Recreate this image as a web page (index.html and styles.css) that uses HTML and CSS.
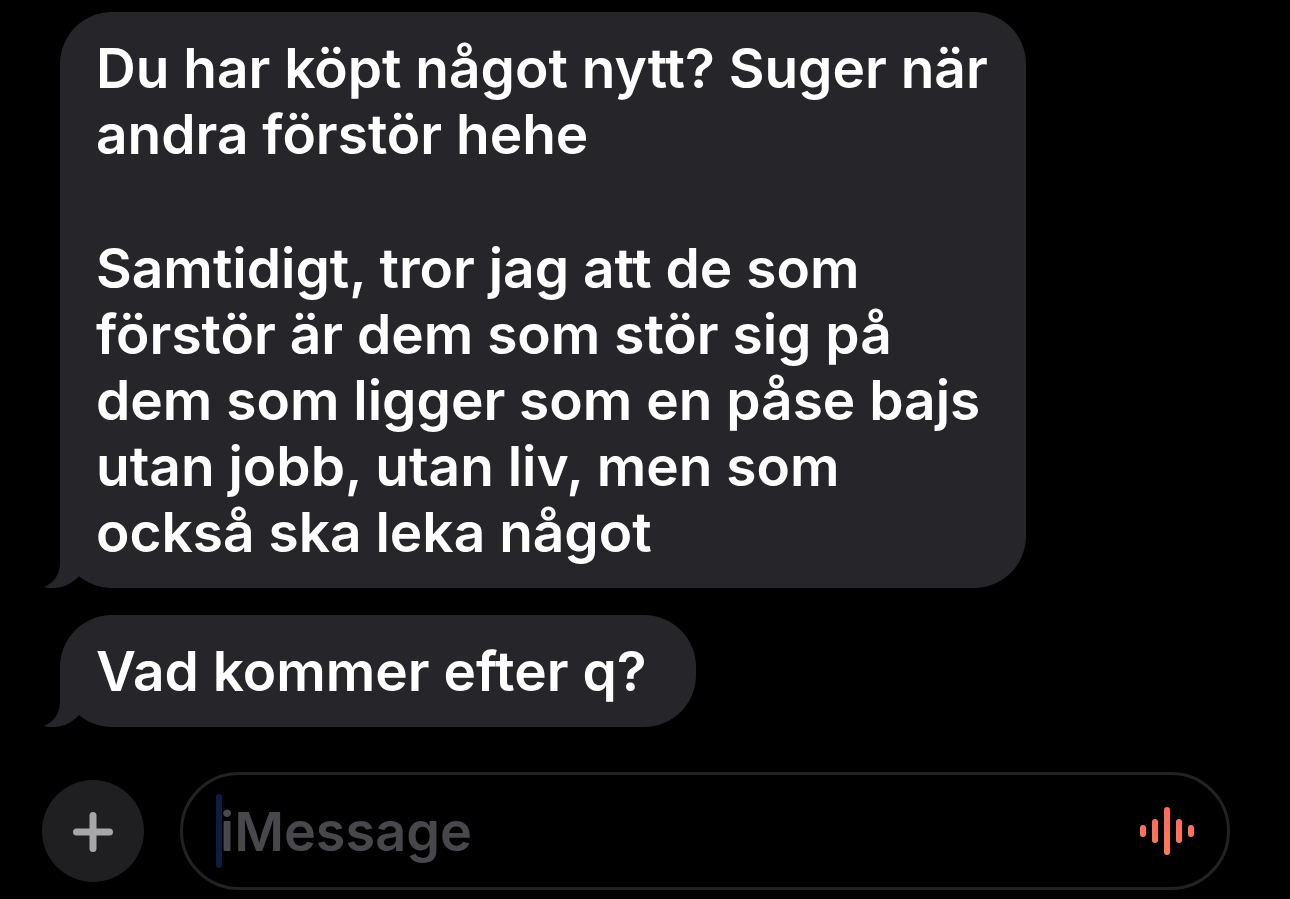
FILE: index.html
```html
<!DOCTYPE html>
<html lang="sv">
<head>
<meta charset="utf-8">
<meta name="viewport" content="width=device-width, initial-scale=1">
<title>iMessage</title>
<link rel="stylesheet" href="styles.css">
</head>
<body>
<main class="chat">
  <section class="messages">
    <article class="bubble bubble-long">
      <p>Du har köpt något nytt? Suger när<br>andra förstör hehe</p>
      <p>Samtidigt, tror jag att de som<br>förstör är dem som stör sig på<br>dem som ligger som en påse bajs<br>utan jobb, utan liv, men som<br>också ska leka något</p>
      <svg class="tail" viewBox="0 0 44 48" aria-hidden="true"><path d="M16 0V23C16 34 10 43 0 47C12 50 25 47 35 36L44 20V0Z"/></svg>
    </article>
    <article class="bubble">
      <p>Vad kommer efter q?</p>
      <svg class="tail" viewBox="0 0 44 48" aria-hidden="true"><path d="M16 0V23C16 34 10 43 0 47C12 50 25 47 35 36L44 20V0Z"/></svg>
    </article>
  </section>
  <form class="composer">
    <button class="add" type="button" aria-label="Lägg till">
      <svg class="plus" viewBox="0 0 42 42" aria-hidden="true"><path d="M21 5.500V38.500M4.500 22H37.500"/></svg>
    </button>
    <div class="field">
      <span class="caret"></span>
      <input class="input" type="text" placeholder="iMessage" aria-label="iMessage">
      <button class="voice" type="button" aria-label="Spela in ljud">
        <svg class="wave" viewBox="0 0 54 48" aria-hidden="true">
          <defs><linearGradient id="coral" gradientUnits="userSpaceOnUse" x1="0" y1="0" x2="0" y2="48"><stop offset="0.2" stop-color="#ff6b5e"/><stop offset="1" stop-color="#ff7e50"/></linearGradient></defs>
          <path stroke="url(#coral)" d="M3 21V27M15 15V33M27 3V45M39 15V33M51 21V27"/>
        </svg>
      </button>
    </div>
  </form>
</main>
</body>
</html>
```
FILE: styles.css
```css
* { box-sizing: border-box; }
body {
  margin: 0;
  background: #000;
  color: #fff;
  font-family: Inter, "Liberation Sans", sans-serif;
}
.chat { padding: 12px 60px 8px; }
.messages {
  display: flex;
  flex-direction: column;
  align-items: flex-start;
  gap: 27px;
}
.bubble {
  position: relative;
  padding: 23px 49px 23px 36px;
  border-radius: 52px;
  background: #26252a;
  font-size: 55px;
  font-weight: 600;
  line-height: 66px;
}
.bubble-long { padding-right: 38px; }
.bubble p { margin: 0; }
.bubble p + p { margin-top: 68px; }
.tail {
  position: absolute;
  left: -16px;
  bottom: 0;
  width: 44px;
  height: 48px;
  fill: #26252a;
}
.composer {
  display: flex;
  align-items: center;
  gap: 36px;
  margin: 45px 0 0 -18px;
}
.add {
  display: grid;
  place-items: center;
  flex: none;
  width: 102px;
  height: 102px;
  padding: 0;
  border: 0;
  border-radius: 50%;
  background: #1f1f21;
}
.plus {
  width: 42px;
  height: 42px;
  fill: none;
  stroke: #a7a7a9;
  stroke-width: 7;
  stroke-linecap: round;
}
.field {
  display: flex;
  flex: 1;
  align-items: center;
  min-width: 0;
  height: 118px;
  padding: 0 33px;
  border: 3px solid #222224;
  border-radius: 59px;
}
.caret {
  flex: none;
  width: 6px;
  height: 74px;
  border-radius: 3px;
  background: #101b40;
}
.input {
  flex: 1;
  min-width: 0;
  height: 80px;
  margin-left: -2px;
  padding: 0;
  border: 0;
  outline: 0;
  background: none;
  color: #fff;
  font: 600 54px Inter, "Liberation Sans", sans-serif;
}
.input::placeholder { color: #48484c; opacity: 1; }
.voice {
  flex: none;
  padding: 0;
  border: 0;
  background: none;
}
.wave {
  display: block;
  width: 54px;
  height: 48px;
  fill: none;
  stroke-width: 6;
  stroke-linecap: round;
}
```
